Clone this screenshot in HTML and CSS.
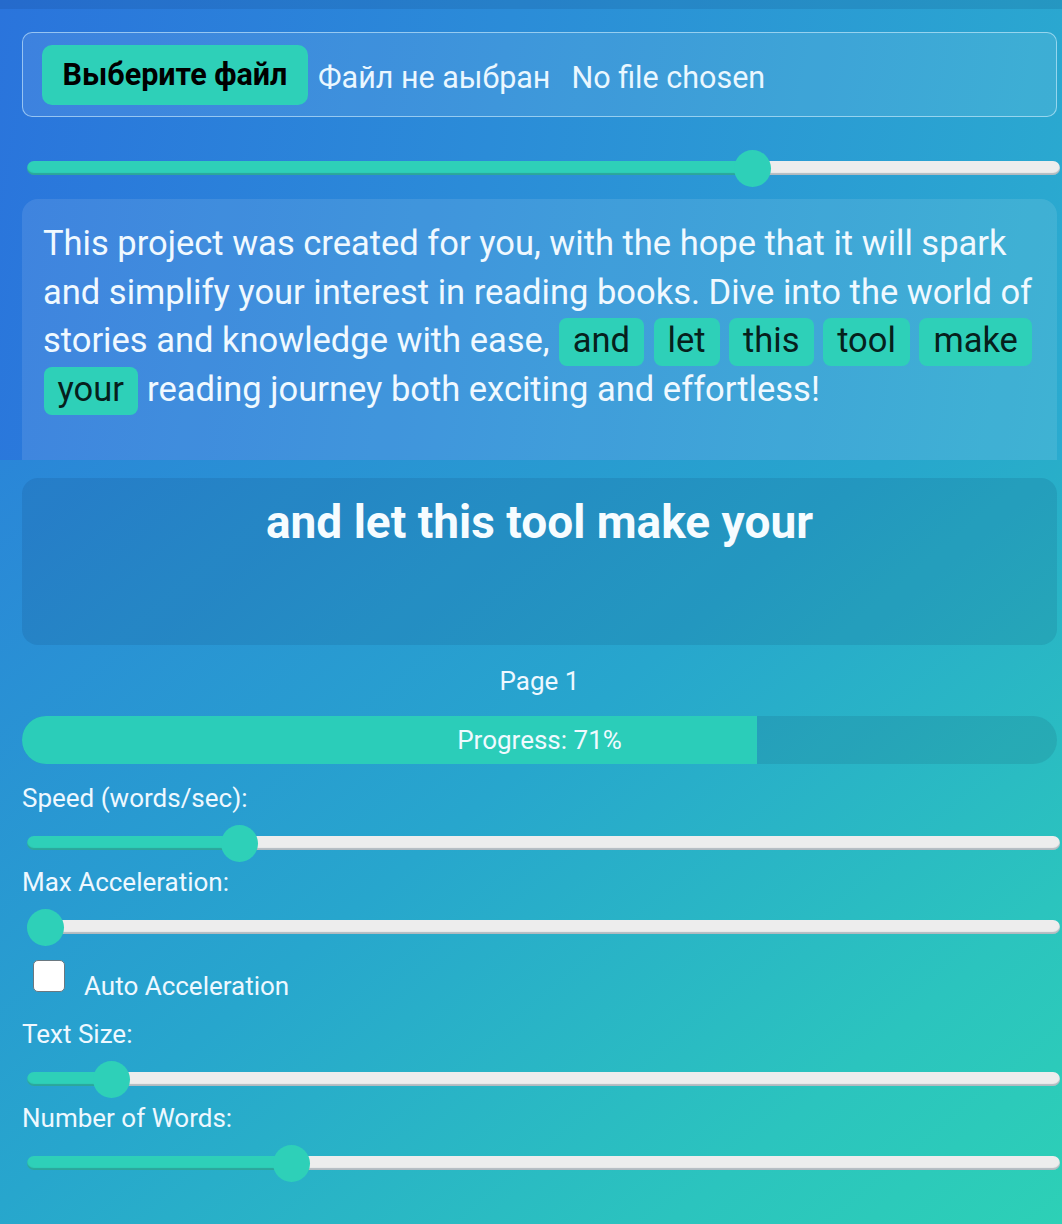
FILE: index.html
```html
<!DOCTYPE html>
<html lang="en">
<head>
<meta charset="utf-8">
<title>Speed Reader</title>
<link rel="stylesheet" href="styles.css">
</head>
<body>
<section class="top">
  <div class="topbar"></div>
  <div class="wrap">
    <div class="file-box">
      <button class="file-btn" type="button">Выберите файл</button>
      <span class="file-text">Файл не аыбран</span>
      <span class="file-text chosen">No file chosen</span>
    </div>
    <input class="range range-top" type="range" min="0" max="1000" value="710" style="--fill:70.25%">
    <div class="text-box">
      <p class="reading">This project was created for you, with the hope that it will spark and simplify your interest in reading books. Dive into the world of stories and knowledge with ease, <span class="hl">and</span> <span class="hl">let</span> <span class="hl">this</span> <span class="hl">tool</span> <span class="hl">make</span> <span class="hl">your</span> reading journey both exciting and effortless!</p>
    </div>
  </div>
</section>
<section class="bottom">
  <div class="wrap">
    <div class="word-card">
      <h1 class="word-title">and let this tool make your</h1>
    </div>
    <div class="page-label">Page 1</div>
    <div class="progress">
      <div class="progress-fill" style="width:71%"></div>
      <div class="progress-text">Progress: 71%</div>
    </div>
    <label class="ctl-label">Speed (words/sec):</label>
    <input class="range" type="range" min="0" max="1000" value="195" style="--fill:20.62%">
    <label class="ctl-label">Max Acceleration:</label>
    <input class="range" type="range" min="0" max="1000" value="0" style="--fill:1.79%">
    <div class="check-row">
      <input class="check" type="checkbox"><span class="check-text">Auto Acceleration</span>
    </div>
    <label class="ctl-label">Text Size:</label>
    <input class="range" type="range" min="0" max="1000" value="66" style="--fill:8.13%">
    <label class="ctl-label">Number of Words:</label>
    <input class="range" type="range" min="0" max="1000" value="247" style="--fill:25.65%">
  </div>
</section>
</body>
</html>
```
FILE: styles.css
```css
html, body {
  margin: 0;
  padding: 0;
  overflow: hidden;
}
body {
  font-family: Roboto, "Noto Sans", "Liberation Sans", sans-serif;
  color: #eef8ff;
  width: 1062px;
  height: 1224px;
}
.top {
  height: 460px;
  overflow: hidden;
  background: linear-gradient(100deg, #2a74dc 0%, #2b8cd8 45%, #2aabcf 100%);
}
.topbar {
  height: 9px;
  background: rgba(10, 40, 90, 0.12);
}
.wrap {
  padding: 0 5px 0 22px;
}
.file-box {
  margin-top: 23px;
  height: 85px;
  box-sizing: border-box;
  border: 1px solid rgba(210, 240, 255, 0.6);
  border-radius: 10px;
  background: rgba(255, 255, 255, 0.09);
  padding: 11px 19px;
  display: flex;
  align-items: center;
}
.file-btn {
  height: 60px;
  width: 266px;
  border: none;
  border-radius: 10px;
  background: #2ed0b8;
  color: #000;
  font-family: Roboto, "Noto Sans", sans-serif;
  font-weight: 700;
  font-size: 30.5px;
  padding: 0;
}
.file-text {
  font-size: 30.5px;
  margin-left: 10px;
  margin-top: 6px;
  color: #eaf7ff;
}
.file-text.chosen {
  margin-left: 21px;
}
.range {
  -webkit-appearance: none;
  appearance: none;
  display: block;
  width: 1033px;
  height: 14px;
  margin: 23px 0 17px 5px;
  padding: 0;
  border-radius: 7px;
  background: linear-gradient(to right, #2ed0b8 var(--fill), #ededed var(--fill));
  box-shadow: inset 0 -2px 1px rgba(40, 70, 90, 0.3);
  outline: none;
}
.range::-webkit-slider-thumb {
  -webkit-appearance: none;
  appearance: none;
  width: 37px;
  height: 37px;
  border-radius: 50%;
  background: #2ed0b8;
  border: none;
}
.range-top {
  margin-top: 44px;
  margin-bottom: 24px;
}
.text-box {
  background: rgba(255, 255, 255, 0.1);
  border-radius: 16px 16px 0 0;
  padding: 20px 8px 40px 21px;
  height: 400px;
}
.reading {
  margin: 0;
  font-size: 34.5px;
  line-height: 48.5px;
  color: #f0f9ff;
}
.hl {
  background: #2ed0b8;
  color: #06201c;
  border-radius: 8px;
  padding: 2px 14px 6px;
  margin: 0 0.5px;
}
.bottom {
  height: 764px;
  overflow: hidden;
  background: linear-gradient(140deg, #2a86d8 0%, #27a6cd 45%, #2bc4be 80%, #2dd0b6 100%);
}
.bottom .wrap {
  padding-top: 18px;
}
.word-card {
  height: 167px;
  box-sizing: border-box;
  border-radius: 16px;
  background: rgba(10, 40, 80, 0.11);
  padding: 17px 20px;
}
.word-title {
  margin: 0;
  text-align: center;
  font-size: 46px;
  font-weight: 700;
  line-height: normal;
  color: #f6fcff;
}
.page-label {
  margin-top: 21px;
  text-align: center;
  font-size: 26px;
  line-height: 30px;
}
.progress {
  margin-top: 20px;
  margin-bottom: 19px;
  height: 48px;
  border-radius: 24px;
  overflow: hidden;
  background: rgba(20, 60, 90, 0.13);
  display: grid;
}
.progress-fill {
  grid-area: 1 / 1;
  height: 100%;
  background: #2bcdb9;
}
.progress-text {
  grid-area: 1 / 1;
  text-align: center;
  font-size: 26px;
  line-height: 48px;
  color: #f0faff;
}
.ctl-label {
  display: block;
  font-size: 26px;
  line-height: 30px;
  margin-left: 0;
}
.check-row {
  margin-top: 26px;
  margin-bottom: 18px;
  font-size: 26px;
  line-height: 30px;
}
.check {
  -webkit-appearance: none;
  appearance: none;
  display: inline-block;
  vertical-align: baseline;
  width: 32px;
  height: 32px;
  box-sizing: border-box;
  margin: 0 0 3px 11px;
  border: 1.5px solid #6a7880;
  border-radius: 5px;
  background: #fff;
}
.check-text {
  margin-left: 19px;
}
```
